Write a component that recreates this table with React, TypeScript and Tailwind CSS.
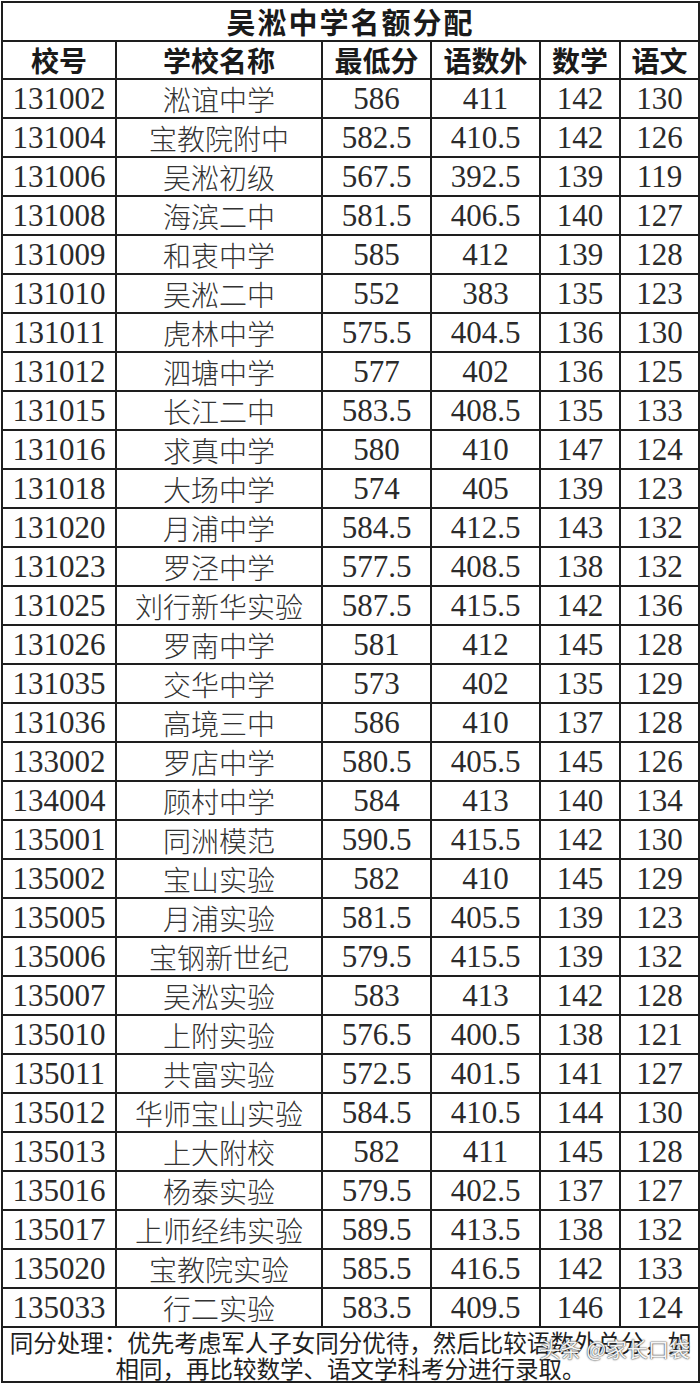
const ROWS: [string, string, string, string, string, string][] = [
  ['131002', '淞谊中学', '586', '411', '142', '130'],
  ['131004', '宝教院附中', '582.5', '410.5', '142', '126'],
  ['131006', '吴淞初级', '567.5', '392.5', '139', '119'],
  ['131008', '海滨二中', '581.5', '406.5', '140', '127'],
  ['131009', '和衷中学', '585', '412', '139', '128'],
  ['131010', '吴淞二中', '552', '383', '135', '123'],
  ['131011', '虎林中学', '575.5', '404.5', '136', '130'],
  ['131012', '泗塘中学', '577', '402', '136', '125'],
  ['131015', '长江二中', '583.5', '408.5', '135', '133'],
  ['131016', '求真中学', '580', '410', '147', '124'],
  ['131018', '大场中学', '574', '405', '139', '123'],
  ['131020', '月浦中学', '584.5', '412.5', '143', '132'],
  ['131023', '罗泾中学', '577.5', '408.5', '138', '132'],
  ['131025', '刘行新华实验', '587.5', '415.5', '142', '136'],
  ['131026', '罗南中学', '581', '412', '145', '128'],
  ['131035', '交华中学', '573', '402', '135', '129'],
  ['131036', '高境三中', '586', '410', '137', '128'],
  ['133002', '罗店中学', '580.5', '405.5', '145', '126'],
  ['134004', '顾村中学', '584', '413', '140', '134'],
  ['135001', '同洲模范', '590.5', '415.5', '142', '130'],
  ['135002', '宝山实验', '582', '410', '145', '129'],
  ['135005', '月浦实验', '581.5', '405.5', '139', '123'],
  ['135006', '宝钢新世纪', '579.5', '415.5', '139', '132'],
  ['135007', '吴淞实验', '583', '413', '142', '128'],
  ['135010', '上附实验', '576.5', '400.5', '138', '121'],
  ['135011', '共富实验', '572.5', '401.5', '141', '127'],
  ['135012', '华师宝山实验', '584.5', '410.5', '144', '130'],
  ['135013', '上大附校', '582', '411', '145', '128'],
  ['135016', '杨泰实验', '579.5', '402.5', '137', '127'],
  ['135017', '上师经纬实验', '589.5', '413.5', '138', '132'],
  ['135020', '宝教院实验', '585.5', '416.5', '142', '133'],
  ['135033', '行二实验', '583.5', '409.5', '146', '124'],
];

const HEADERS = ['校号', '学校名称', '最低分', '语数外', '数学', '语文'];

const cell = 'border-2 border-[#1e1e1e] text-center align-middle p-0';
const num = "font-['Liberation_Serif','Noto_Sans_CJK_SC',serif] text-[31px] text-[#2a2a2a] leading-none";

export default function App() {
  return (
    <div className="bg-white w-[700px] h-[1385px] overflow-hidden pl-[1px] pt-[1px]">
      <table className="table-fixed border-collapse w-[697px] font-['Noto_Sans_CJK_SC',sans-serif]">
        <colgroup>
          <col className="w-[114px]" />
          <col className="w-[206px]" />
          <col className="w-[109px]" />
          <col className="w-[109px]" />
          <col className="w-[80px]" />
          <col className="w-[79px]" />
        </colgroup>
        <thead>
          <tr className="h-[39px]">
            <th colSpan={6} className={`${cell} text-[29px] font-bold tracking-[2px] text-[#1a1a1a] leading-none`}>
              吴淞中学名额分配
            </th>
          </tr>
          <tr className="h-[38px]">
            {HEADERS.map((h) => (
              <th key={h} className={`${cell} text-[28px] font-bold text-[#1a1a1a] leading-none`}>
                {h}
              </th>
            ))}
          </tr>
        </thead>
        <tbody>
          {ROWS.map((r) => (
            <tr key={r[0]} className="h-[39px]">
              <td className={`${cell} ${num}`}>{r[0]}</td>
              <td className={`${cell} text-[28px] font-light text-[#333] leading-none`}>{r[1]}</td>
              <td className={`${cell} ${num}`}>{r[2]}</td>
              <td className={`${cell} ${num}`}>{r[3]}</td>
              <td className={`${cell} ${num}`}>{r[4]}</td>
              <td className={`${cell} ${num}`}>{r[5]}</td>
            </tr>
          ))}
          <tr className="h-[55px]">
            <td colSpan={6} className={`${cell} relative text-[23.5px] text-[#1e1e1e] leading-[26px]`}>
              <div>同分处理：优先考虑军人子女同分优待，然后比较语数外总分，如</div>
              <div>相同，再比较数学、语文学科考分进行录取。</div>
              {/* watermark */}
              <span className="absolute right-[8px] top-[10px] text-[21px] leading-none text-[#f4f4f4] [text-shadow:0_0_1px_#333,0_0_2px_#555]">
                头条 @家长口袋
              </span>
            </td>
          </tr>
        </tbody>
      </table>
    </div>
  );
}
